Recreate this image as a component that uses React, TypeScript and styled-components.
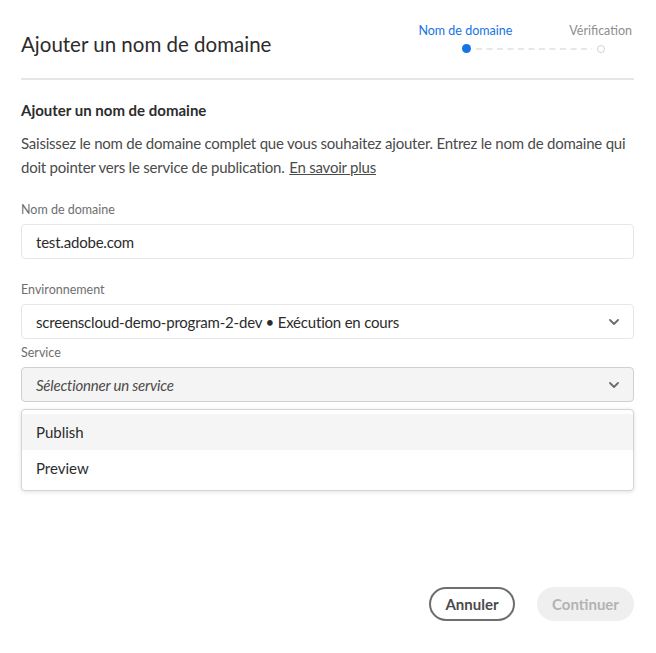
import React from 'react'
import styled, { createGlobalStyle } from 'styled-components'

const GlobalStyle = createGlobalStyle`
  html, body {
    margin: 0;
    padding: 0;
    background: #ffffff;
  }
  body {
    font-family: Lato, "Liberation Sans", sans-serif;
    color: #4b4b4b;
  }
  * {
    box-sizing: border-box;
  }
`

const Dialog = styled.div`
  display: flex;
  flex-direction: column;
  height: 653px;
  padding: 0 22px 32px 21px;
`

const Header = styled.div`
  display: flex;
  justify-content: space-between;
  align-items: flex-start;
  height: 78px;
`

const Title = styled.h1`
  margin: 32px 0 0;
  font-size: 20.5px;
  line-height: 24px;
  font-weight: 400;
  color: #2c2c2c;
`

const Stepper = styled.div`
  display: flex;
  flex-direction: column;
  margin-top: 23px;
  margin-right: 2px;
`

const StepLabels = styled.div`
  display: flex;
  gap: 57px;
`

const StepLabel = styled.span<{ active?: boolean }>`
  font-size: 12.5px;
  line-height: 16px;
  color: ${({ active }) => (active ? '#1473e6' : '#8e8e8e')};
  white-space: nowrap;
`

const Track = styled.div`
  display: flex;
  align-items: center;
  gap: 5px;
  margin-top: 5px;
  margin-left: 44px;
`

const Dot = styled.span<{ done?: boolean }>`
  display: block;
  width: ${({ done }) => (done ? '9px' : '8px')};
  height: ${({ done }) => (done ? '9px' : '8px')};
  border-radius: 50%;
  background: ${({ done }) => (done ? '#1473e6' : '#ffffff')};
  border: ${({ done }) => (done ? 'none' : '1.5px solid #d3d3d3')};
`

const Divider = styled.hr`
  margin: 0;
  border: none;
  height: 2px;
  background: #e6e6e6;
`

const SectionHeading = styled.h2`
  margin: 20px 0 0;
  font-size: 15px;
  line-height: 20px;
  font-weight: 700;
  color: #2c2c2c;
`

const Description = styled.p`
  margin: 11px 0 0;
  font-size: 15px;
  line-height: 24px;
  letter-spacing: -0.22px;
  color: #4b4b4b;
`

const Link = styled.a`
  margin-left: 1px;
  color: inherit;
  text-decoration: underline;
`

const Field = styled.div<{ gapTop: number }>`
  display: flex;
  flex-direction: column;
  margin-top: ${({ gapTop }) => gapTop}px;
`

const Label = styled.label`
  font-size: 12.5px;
  line-height: 16px;
  color: #6e6e6e;
  margin-bottom: 6px;
`

const Box = styled.div<{ open?: boolean }>`
  display: flex;
  align-items: center;
  justify-content: space-between;
  height: 35px;
  padding: 0 14px;
  border: 1px solid ${({ open }) => (open ? '#d0d0d0' : '#e6e6e6')};
  border-radius: 4px;
  background: ${({ open }) => (open ? '#f4f4f4' : '#ffffff')};
  font-size: 15px;
  letter-spacing: -0.2px;
  color: #2c2c2c;
`

const Placeholder = styled.span`
  font-style: italic;
  color: #4b4b4b;
`

const Menu = styled.ul`
  list-style: none;
  margin: 7px 0 0;
  padding: 4px 0;
  border: 1px solid #d5d5d5;
  border-radius: 4px;
  box-shadow: 0 1px 4px rgba(0, 0, 0, 0.12);
  background: #ffffff;
`

const MenuItem = styled.li<{ hovered?: boolean }>`
  height: 36px;
  display: flex;
  align-items: center;
  padding: 0 14px;
  font-size: 15px;
  color: #2c2c2c;
  background: ${({ hovered }) => (hovered ? '#f5f5f5' : 'transparent')};
`

const Footer = styled.div`
  margin-top: auto;
  display: flex;
  justify-content: flex-end;
  gap: 22px;
`

const Button = styled.button<{ variant: 'secondary' | 'disabled' }>`
  height: 34px;
  padding: 0 14px;
  border-radius: 17px;
  font-family: inherit;
  font-size: 15px;
  font-weight: 700;
  border: ${({ variant }) => (variant === 'secondary' ? '2px solid #6e6e6e' : 'none')};
  background: ${({ variant }) => (variant === 'secondary' ? '#ffffff' : '#efefef')};
  color: ${({ variant }) => (variant === 'secondary' ? '#4b4b4b' : '#b3b3b3')};
  min-width: ${({ variant }) => (variant === 'secondary' ? '86px' : '97px')};
`

const Chevron = () => (
  <svg width="10" height="6" viewBox="0 0 10 6" fill="none">
    <path d="M1 1l4 4 4-4" stroke="#6e6e6e" strokeWidth="1.8" strokeLinecap="round" strokeLinejoin="round" />
  </svg>
)

const DashedLine = () => (
  <svg width="116" height="2" viewBox="0 0 116 2">
    <line x1="0" y1="1" x2="116" y2="1" stroke="#cfcfcf" strokeWidth="1.2" strokeDasharray="6 4.5" />
  </svg>
)

export default function App() {
  return (
    <>
      <GlobalStyle />
      <Dialog>
        <Header>
          <Title>Ajouter un nom de domaine</Title>
          <Stepper>
            <StepLabels>
              <StepLabel active>Nom de domaine</StepLabel>
              <StepLabel>Vérification</StepLabel>
            </StepLabels>
            <Track>
              <Dot done />
              <DashedLine />
              <Dot />
            </Track>
          </Stepper>
        </Header>
        <Divider />

        <SectionHeading>Ajouter un nom de domaine</SectionHeading>
        <Description>
          Saisissez le nom de domaine complet que vous souhaitez ajouter. Entrez le nom de domaine qui
          doit pointer vers le service de publication. <Link href="#">En savoir plus</Link>
        </Description>

        <Field gapTop={23}>
          <Label>Nom de domaine</Label>
          <Box>test.adobe.com</Box>
        </Field>

        <Field gapTop={23}>
          <Label>Environnement</Label>
          <Box>
            <span>screenscloud-demo-program-2-dev • Exécution en cours</span>
            <Chevron />
          </Box>
        </Field>

        <Field gapTop={6}>
          <Label>Service</Label>
          <Box open>
            <Placeholder>Sélectionner un service</Placeholder>
            <Chevron />
          </Box>
        </Field>

        <Menu>
          <MenuItem hovered>Publish</MenuItem>
          <MenuItem>Preview</MenuItem>
        </Menu>

        <Footer>
          <Button variant="secondary">Annuler</Button>
          <Button variant="disabled">Continuer</Button>
        </Footer>
      </Dialog>
    </>
  )
}
